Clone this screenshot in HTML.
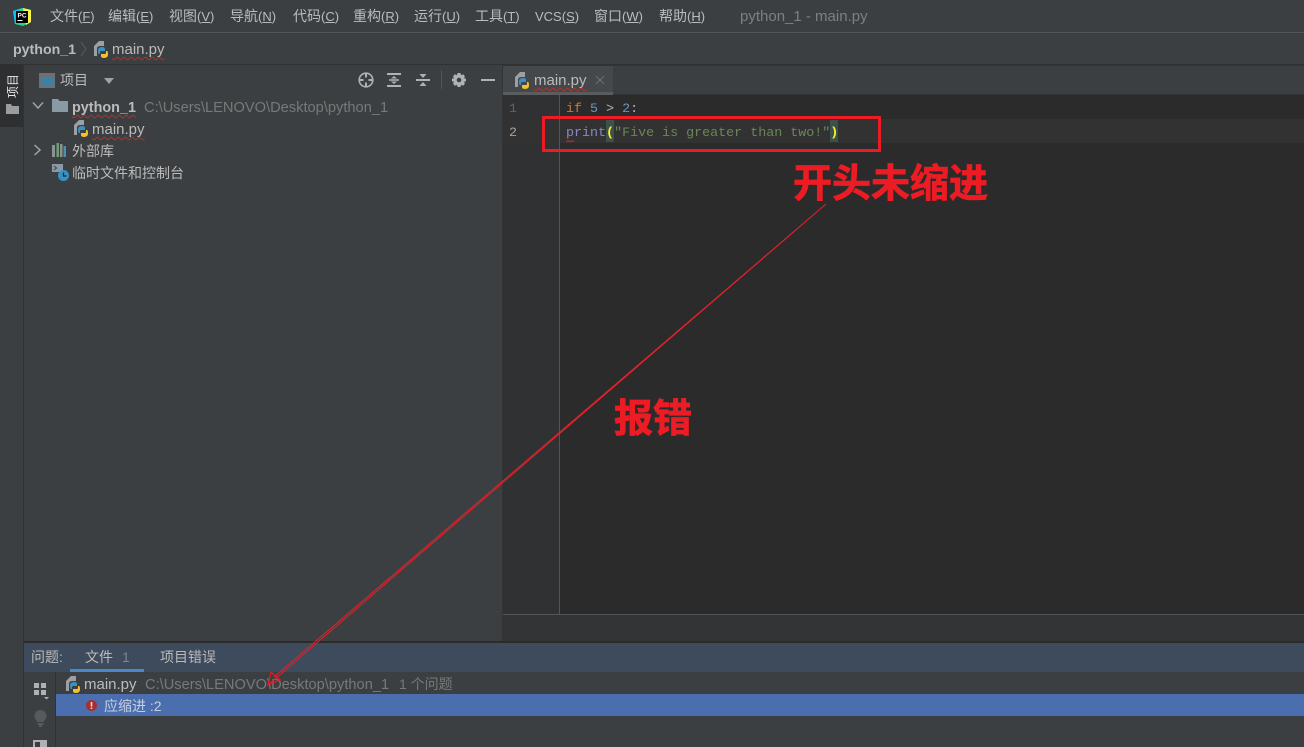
<!DOCTYPE html>
<html><head><meta charset="utf-8"><style>
html,body{margin:0;padding:0}
body{width:1304px;height:747px;overflow:hidden;background:#3c3f41;position:relative;font-family:"Liberation Sans","Noto Sans CJK SC",sans-serif;font-size:14px;color:#bbb}
.a{position:absolute;white-space:pre;line-height:18px}
.b{position:absolute}
.w{text-decoration:underline wavy #b5312c 1px;text-underline-offset:2px;text-decoration-skip-ink:none}
.g{color:#787878}
.m{font-family:"Liberation Mono",monospace;font-size:13.35px;line-height:18px;position:absolute;white-space:pre}
.r{position:absolute;color:#ed1c24;font-weight:700;font-family:"Noto Sans CJK SC",sans-serif;white-space:pre;line-height:1;-webkit-text-stroke:.8px #ed1c24}
i{font-style:normal;font-size:13px}
u{text-underline-offset:1px}
svg{position:absolute;overflow:visible}
</style></head><body>
<!-- structure -->
<div class="b" style="left:0;top:32px;width:1304px;height:1px;background:#555"></div>
<div class="b" style="left:0;top:64px;width:1304px;height:1px;background:#2f3132"></div>
<div class="b" style="left:0;top:65px;width:24px;height:682px;background:#3c3f41"></div>
<div class="b" style="left:23px;top:65px;width:1px;height:682px;background:#323232"></div>
<div class="b" style="left:0;top:65px;width:23px;height:62px;background:#2d2f30"></div>
<div class="b" style="left:502px;top:65px;width:802px;height:576px;background:#333435"></div>
<div class="b" style="left:503px;top:66px;width:801px;height:29px;background:#3c3f41"></div>
<div class="b" style="left:503px;top:66px;width:110px;height:26px;background:#45484a"></div>
<div class="b" style="left:503px;top:92px;width:110px;height:3px;background:#5a5d5f"></div>
<div class="b" style="left:613px;top:94px;width:691px;height:1px;background:#323232"></div>
<div class="b" style="left:503px;top:95px;width:801px;height:519px;background:#2b2b2b"></div>
<div class="b" style="left:503px;top:95px;width:56px;height:519px;background:#303132"></div>
<div class="b" style="left:503px;top:119px;width:801px;height:24px;background:#323232"></div>
<div class="b" style="left:559px;top:95px;width:1px;height:519px;background:#555"></div>
<div class="b" style="left:503px;top:614px;width:801px;height:1px;background:#555"></div>
<div class="b" style="left:503px;top:615px;width:801px;height:26px;background:#333435"></div>
<div class="b" style="left:24px;top:641px;width:1280px;height:2px;background:#2b2b2b"></div>
<div class="b" style="left:24px;top:643px;width:1280px;height:29px;background:#3d4b5c"></div>
<div class="b" style="left:70px;top:669px;width:74px;height:3px;background:#4a88c7"></div>
<div class="b" style="left:55px;top:672px;width:1px;height:75px;background:#323232"></div>
<div class="b" style="left:56px;top:694px;width:1248px;height:22px;background:#4b6eaf"></div>

<!-- logo -->
<svg style="left:13px;top:8px" width="18" height="18" viewBox="0 0 18 18"><path d="M0 3L9 0L18 2L18 14L10 18L2 16Z" fill="#21d789"/><path d="M10 0L18 2L18 14L13 17Z" fill="#fcf84a"/><path d="M0 3L6 1L4 12L2 16Z" fill="#07c3f2"/><rect x="3" y="3" width="12" height="12" fill="#000"/><rect x="4.500" y="12" width="5" height="1" fill="#fff"/><text x="4.500" y="9.500" font-size="6.500" font-weight="700" fill="#fff" font-family="Liberation Sans">PC</text></svg>

<!-- menu -->
<div class="a" style="left:50px;top:7px">文件<i>(<u>F</u>)</i></div>
<div class="a" style="left:108px;top:7px">编辑<i>(<u>E</u>)</i></div>
<div class="a" style="left:169px;top:7px">视图<i>(<u>V</u>)</i></div>
<div class="a" style="left:230px;top:7px">导航<i>(<u>N</u>)</i></div>
<div class="a" style="left:293px;top:7px">代码<i>(<u>C</u>)</i></div>
<div class="a" style="left:353px;top:7px">重构<i>(<u>R</u>)</i></div>
<div class="a" style="left:414px;top:7px">运行<i>(<u>U</u>)</i></div>
<div class="a" style="left:475px;top:7px">工具<i>(<u>T</u>)</i></div>
<div class="a" style="left:535px;top:7px"><i>VCS(<u>S</u>)</i></div>
<div class="a" style="left:594px;top:7px">窗口<i>(<u>W</u>)</i></div>
<div class="a" style="left:659px;top:7px">帮助<i>(<u>H</u>)</i></div>
<div class="a" style="left:740px;top:8px;color:#7d7f80;font-size:15px">python_1 - main.py</div>

<!-- breadcrumb -->
<div class="a" style="left:13px;top:41px;font-weight:700;font-size:14.2px">python_1</div>
<svg style="left:80px;top:41px" width="8" height="16"><path d="M1 1L6 8L1 15" fill="none" stroke="#5a5d5f"/></svg>
<svg style="left:94px;top:41px" width="15" height="17" viewBox="0 0 15 17"><use href="#py"/></svg>
<div class="a" style="left:112px;top:41px;font-size:15px"><span class="w">main.py</span></div>

<!-- strip -->
<div class="a" style="left:6px;top:74px;color:#e8e8e8;writing-mode:vertical-rl;text-orientation:sideways;transform:rotate(180deg);font-size:12px;line-height:14px">项目</div>
<svg style="left:6px;top:103px" width="14" height="12"><path d="M0 1H5L6 3H13V11H0Z" fill="#9a9d9f"/></svg>

<!-- project toolbar -->
<svg style="left:39px;top:73px" width="16" height="15"><rect x=".5" y=".5" width="15" height="14" fill="#6e7173" stroke="#6e7173"/><rect x="2" y="4" width="12" height="9" fill="#3f7ea6"/></svg>
<div class="a" style="left:60px;top:71px">项目</div>
<svg style="left:104px;top:78px" width="10" height="6"><path d="M0 0H10L5 6Z" fill="#a0a3a5"/></svg>
<svg style="left:358px;top:72px" width="16" height="16" fill="none" stroke="#afb1b3" stroke-width="1.6"><circle cx="8" cy="8" r="6.800"/><path d="M8 2V5.500M8 10.500V14M2 8H5.500M10.500 8H14" stroke-width="2"/></svg>
<svg style="left:387px;top:72px" width="14" height="16"><path d="M0 1H14V3H0ZM0 13H14V15H0ZM2 7.300H12V8.700H2Z" fill="#afb1b3"/><path d="M7 4L10 6.500H4ZM7 12L10 9.500H4Z" fill="#afb1b3"/></svg>
<svg style="left:416px;top:72px" width="14" height="16"><path d="M0 7H14V9H0Z" fill="#afb1b3"/><path d="M7 6L3.500 2H10.500ZM7 10L10.500 14H3.500Z" fill="#afb1b3"/></svg>
<div class="b" style="left:441px;top:70px;width:1px;height:19px;background:#515456"></div>
<svg style="left:451px;top:72px" width="16" height="16" viewBox="0 0 16 16"><path d="M6.500 1H9.500L10 3.200L12.200 2.200L14 4.500L12.800 6.200L15 6.500V9.500L12.800 9.800L14 11.500L12.200 13.800L10 12.800L9.500 15H6.500L6 12.800L3.800 13.800L2 11.500L3.200 9.800L1 9.500V6.500L3.200 6.200L2 4.500L3.800 2.200L6 3.200Z" fill="#afb1b3"/><circle cx="8" cy="8" r="2.300" fill="#3c3f41"/></svg>
<div class="b" style="left:481px;top:79px;width:14px;height:2px;background:#afb1b3"></div>

<!-- tree -->
<svg style="left:32px;top:101px" width="12" height="9"><path d="M1 1.500L6 7L11 1.500" fill="none" stroke="#a0a3a5" stroke-width="1.500"/></svg>
<svg style="left:52px;top:99px" width="16" height="13"><path d="M0 0H6L7.500 2H16V13H0Z" fill="#8a9aa5"/></svg>
<div class="a" style="left:72px;top:99px;font-weight:700;font-size:14.4px"><span class="w">python_1</span></div>
<div class="a g" style="left:144px;top:99px;font-size:14.65px">C:\Users\LENOVO\Desktop\python_1</div>
<svg style="left:74px;top:120px" width="15" height="17" viewBox="0 0 15 17"><use href="#py"/></svg>
<div class="a" style="left:92px;top:121px;font-size:15px"><span class="w">main.py</span></div>
<svg style="left:33px;top:144px" width="9" height="12"><path d="M1.500 1L7 6L1.500 11" fill="none" stroke="#a0a3a5" stroke-width="1.500"/></svg>
<svg style="left:52px;top:143px" width="16" height="14"><path d="M0 2H3V14H0Z" fill="#8d9095"/><path d="M4.500 0H7V14H4.500Z" fill="#6aa06f"/><path d="M8 1H10.500V14H8Z" fill="#8d9095"/><path d="M11.500 3H14V14H11.500Z" fill="#4f8fb5"/></svg>
<div class="a" style="left:72px;top:142px">外部库</div>
<svg style="left:52px;top:164px" width="18" height="18"><path d="M0 0H11V8H0Z" fill="#8a9aa5"/><path d="M2 2L4.500 4L2 6" fill="none" stroke="#3c3f41"/><circle cx="11.500" cy="11.500" r="5.500" fill="#3592c4"/><path d="M11.500 8.500V12H14.500" fill="none" stroke="#1d2a33" stroke-width="1.200"/></svg>
<div class="a" style="left:72px;top:164px">临时文件和控制台</div>

<!-- tab -->
<svg style="left:515px;top:72px" width="15" height="17" viewBox="0 0 15 17"><use href="#py"/></svg>
<div class="a" style="left:534px;top:72px;font-size:15px"><span class="w">main.py</span></div>
<svg style="left:595px;top:75px" width="10" height="10"><path d="M1 1L9 9M9 1L1 9" stroke="#6e7173" stroke-width="1"/></svg>

<!-- code -->
<div class="m" style="left:509px;top:101px;color:#606366">1</div>
<div class="m" style="left:509px;top:125px;color:#a4a3a3">2</div>
<div class="m" style="left:566px;top:101px;color:#a9b7c6"><span style="color:#cc7832">if</span> <span style="color:#6897bb">5</span> &gt; <span style="color:#6897bb">2</span>:</div>
<div class="b" style="left:606px;top:120px;width:8px;height:22px;background:#3b514d"></div>
<div class="b" style="left:830px;top:120px;width:8px;height:22px;background:#3b514d"></div>
<div class="m" style="left:566px;top:125px;color:#a9b7c6"><span style="color:#8888c6">print</span><span style="color:#ffef28;font-weight:700">(</span><span style="color:#6a8759">"Five is greater than two!"</span><span style="color:#ffef28;font-weight:700">)</span></div>
<svg style="left:566px;top:140px" width="10" height="4"><path d="M0 2L2 0.500L4 2L6 0.500L8 2" fill="none" stroke="#b5312c"/></svg>

<!-- bottom panel -->
<div class="a" style="left:31px;top:648px">问题:</div>
<div class="a" style="left:85px;top:648px">文件</div>
<div class="a" style="left:122px;top:648px;color:#7d8690">1</div>
<div class="a" style="left:160px;top:648px">项目错误</div>
<svg style="left:34px;top:683px" width="16" height="16"><path d="M0 0H5V5H0ZM7 0H12V5H7ZM0 7H5V12H0ZM7 7H12V12H7Z" fill="#afb1b3"/><path d="M10 14H15L12.500 16.500Z" fill="#afb1b3"/></svg>
<svg style="left:34px;top:710px" width="13" height="17"><path d="M6.500 0A6 6 0 0 1 12.500 6C12.500 9 10 10 10 12H3C3 10 .5 9 .5 6A6 6 0 0 1 6.500 0Z" fill="#565a5c"/><path d="M3.500 13H9.500V15H8V17H5V15H3.500Z" fill="#565a5c"/></svg>
<svg style="left:33px;top:740px" width="14" height="7"><path d="M0 0H14V7H0Z" fill="#afb1b3"/><path d="M2 2H7V7H2Z" fill="#3c3f41"/></svg>
<svg style="left:66px;top:676px" width="15" height="17" viewBox="0 0 15 17"><use href="#py"/></svg>
<div class="a" style="left:84px;top:676px;font-size:15px">main.py</div>
<div class="a g" style="left:145px;top:676px;font-size:14.65px">C:\Users\LENOVO\Desktop\python_1</div>
<div class="a g" style="left:399px;top:675px">1 个问题</div>
<svg style="left:86px;top:700px" width="11" height="11"><circle cx="5.500" cy="5.500" r="5.500" fill="#a82f2f"/><path d="M4.700 2H6.300V6.500H4.700ZM4.700 7.500H6.300V9H4.700Z" fill="#f0d8d8"/></svg>
<div class="a" style="left:104px;top:697px;color:#c5cfe0">应缩进 :2</div>

<!-- annotations -->
<div class="b" style="left:542px;top:116px;width:333px;height:30px;border:3px solid #ed1c24;border-radius:1px"></div>
<div class="r" style="left:793px;top:162px;font-size:39px">开头未缩进</div>
<div class="r" style="left:614px;top:397px;font-size:39px">报错</div>
<svg style="left:0;top:0" width="1304" height="747"><path d="M826 204L274 677M826 204L268 685" fill="none" stroke="#e0222a" stroke-width="1"/><path d="M268 685L280 680L271 672Z" fill="none" stroke="#e01c24" stroke-width="1.200"/></svg>

<svg width="0" height="0" style="position:absolute"><defs><g id="py"><path d="M0 5L5 0H10V5H6Q3 5 3 8V15H0Z" fill="#9da0a3"/><path d="M4 9.500Q4 6 8 6Q11 6 11 8V10H7Q6 10 6 11V13H5Q4 13 4 9.500Z" fill="#3d8fc4"/><path d="M14 13.500Q14 17 10 17Q7 17 7 15V13H11Q12 13 12 12V10H13Q14 10 14 13.500Z" fill="#f3c02e"/></g></defs></svg>
</body></html>
